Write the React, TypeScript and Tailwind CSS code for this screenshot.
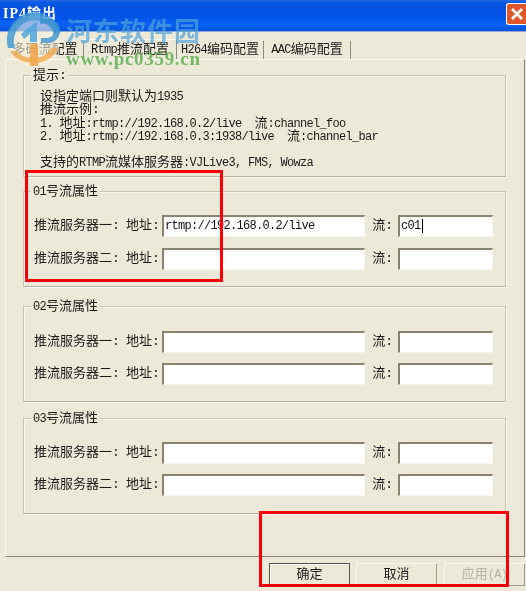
const cjk = "font-['Liberation_Mono','Noto_Sans_CJK_SC',monospace]";

function A({ children }: { children: React.ReactNode }) {
  return <span className="text-[12px] tracking-[-0.7px]">{children}</span>;
}

function Field({ children, className = "" }: { children?: React.ReactNode; className?: string }) {
  return (
    <div className={`h-[22px] bg-white border-t-2 border-l-2 border-b border-r border-t-[#87836f] border-l-[#87836f] border-b-[#f6f5ee] border-r-[#f6f5ee] pl-[1px] text-[12px] tracking-[-0.7px] leading-[18px] text-[#111] ${className}`}>
      {children}
    </div>
  );
}

function Row({ label, url, stream }: { label: string; url?: string; stream?: React.ReactNode }) {
  return (
    <div className="flex items-center h-[22px]">
      <span className="w-[92px] shrink-0 text-[13px] whitespace-nowrap">{label}</span>
      <span className="w-[36px] shrink-0 text-[13px] whitespace-nowrap">地址:</span>
      <Field className="w-[203px] shrink-0">{url}</Field>
      <span className="w-[33px] shrink-0 pr-[5px] text-[13px] text-right whitespace-nowrap">流:</span>
      <Field className="w-[95px] shrink-0">{stream}</Field>
    </div>
  );
}

function Group({ title, children, className = "" }: { title: React.ReactNode; children: React.ReactNode; className?: string }) {
  return (
    <div className={`relative w-[483px] border border-t-[#c5c2b0] border-l-[#c5c2b0] border-b-[#b5b2a0] border-r-[#c5c2b0] shadow-[inset_1px_1px_0_#f8f7f0,1px_1px_0_#f8f7f0] ${className}`}>
      <span className="absolute left-[7px] top-[-8px] bg-[#ece9d8] px-[2px] text-[13px] leading-[15px] whitespace-nowrap">{title}</span>
      {children}
    </div>
  );
}

function StreamGroup({ no, url, stream, className = "", rows }: { no: string; url?: string; stream?: React.ReactNode; className?: string; rows: string }) {
  return (
    <Group title={<><A>{no}</A>号流属性</>} className={`h-[96px] pl-[10px] ${className}`}>
      <div className={`flex flex-col ${rows}`}>
        <Row label="推流服务器一:" url={url} stream={stream} />
        <Row label="推流服务器二:" />
      </div>
    </Group>
  );
}

function Btn({ children, primary, disabled, className = "" }: { children: React.ReactNode; primary?: boolean; disabled?: boolean; className?: string }) {
  return (
    <div className={`w-[81px] h-[23px] flex items-center justify-center text-[13px] bg-[#ece9d8] border ${primary ? "border-[#55544a] shadow-[inset_1px_1px_0_#fff]" : "border-t-[#f8f7f0] border-l-[#f8f7f0] border-r-[#9d9a88] border-b-[#9d9a88]"} ${disabled ? "text-[#b5b2a0]" : ""} ${className}`}>
      {children}
    </div>
  );
}

function Tab({ children, active, className = "" }: { children: React.ReactNode; active?: boolean; className?: string }) {
  return (
    <div className={`flex items-center justify-center whitespace-nowrap text-[13px] border-r border-r-[#8f8c7b] ${active ? "h-[20px]" : "h-[18px]"} ${className}`}>
      {children}
    </div>
  );
}

function Line({ children }: { children?: React.ReactNode }) {
  return <div className="h-[13.3px] leading-[13.3px]">{children}</div>;
}

export default function App() {
  return (
    <div className={`relative w-[526px] h-[591px] overflow-hidden bg-[#ece9d8] text-[#1a1a1a] blur-[0.3px] ${cjk}`}>
      <div className="h-[32px] flex items-center justify-between border-b border-b-[#8fa6d8] bg-[linear-gradient(180deg,#2a6ae0_0%,#0a5ae6_8%,#0350e0_25%,#0054e8_55%,#0a62f5_80%,#0252d8_100%)]">
        <span className="ml-[3px] mt-[-4px] text-white font-bold text-[14px] tracking-[1px] whitespace-nowrap font-['Liberation_Serif','Noto_Sans_CJK_SC',serif]">IP4输出</span>
        <div className="w-[20px] h-[22px] mt-[-4px] flex items-center justify-center rounded-l-[3px] border border-white bg-[#e0572c] border-r-0">
          <svg width="14" height="14" viewBox="0 0 14 14"><path d="M2 2L12 12M12 2L2 12" stroke="#fff" strokeWidth="2.6" /></svg>
        </div>
      </div>

      <div className="h-[27px] flex items-end pl-[7px]">
        <Tab className="w-[77px]">多码流配置</Tab>
        <Tab active className="w-[93px] border-t border-t-[#f8f7f0]"><A>Rtmp</A>推流配置</Tab>
        <Tab className="w-[87px]"><A>H264</A>编码配置</Tab>
        <Tab className="w-[87px]"><A>AAC</A>编码配置</Tab>
      </div>

      <div className="ml-[5px] w-[520px] h-[498px] pl-[17px] pt-[15px] flex flex-col border border-t-[#f8f7f0] border-l-[#f8f7f0] border-r-[#87836f] border-b-[#87836f]">
        <Group title="提示:" className="h-[102px] mb-[14px]">
          <div className="pl-[16px] pt-[14px] text-[13px] whitespace-pre">
            <Line>设指定端口则默认为<A>1935</A></Line>
            <Line>推流示例:</Line>
            <Line><A>1. </A>地址<A>:rtmp://192.168.0.2/live  </A>流<A>:channel_foo</A></Line>
            <Line><A>2. </A>地址<A>:rtmp://192.168.0.3:1938/live  </A>流<A>:channel_bar</A></Line>
            <Line />
            <Line>支持的<A>RTMP</A>流媒体服务器<A>:VJLive3, FMS, Wowza</A></Line>
          </div>
        </Group>
        <StreamGroup
          no="01"
          url="rtmp://192.168.0.2/live"
          stream={<span className="border-r border-r-black pr-[1px]">c01</span>}
          rows="pt-[23px] gap-[11px]"
          className="mb-[19px]"
        />
        <StreamGroup no="02" rows="pt-[24px] gap-[10px]" className="mb-[16px]" />
        <StreamGroup no="03" rows="pt-[23px] gap-[10px]" />
      </div>

      <div className="flex justify-end gap-[6px] pr-[1px] pt-[6px]">
        <Btn primary>确定</Btn>
        <Btn>取消</Btn>
        <Btn disabled className="ml-[1px]">应用 <A>(A)</A></Btn>
      </div>

      {/* watermark */}
      <div className="absolute left-[6px] top-[10px] w-[58px] h-[58px] pointer-events-none">
        <svg width="58" height="58" viewBox="0 0 58 58">
          <circle cx="28" cy="31" r="26" fill="#f8f0dc" opacity="0.6" />
          <path d="M2 38A27 27 0 0 1 55 22L48 24A20 20 0 0 0 9 38Z" fill="#3b93cf" opacity="0.8" />
          <path d="M15 24L31 11V32H24V24L18 29Z" fill="#4fa6dc" opacity="0.85" />
          <path d="M34 9H42A12 12 0 0 1 42 33H35V28H41A7 7 0 0 0 41 14H34Z" fill="#3b93cf" opacity="0.8" />
          <path d="M24 34H32V56H24Z" fill="#f0a040" opacity="0.8" />
          <path d="M4 41A26 22 0 0 0 52 38L45 38A19 15 0 0 1 11 41Z" fill="#f0a848" opacity="0.8" />
        </svg>
      </div>
      <div className="absolute left-[66px] top-[11px] text-[26px] leading-[38px] font-bold tracking-[1px] text-[#4fa3d8]/70 whitespace-nowrap font-['Noto_Sans_CJK_SC',sans-serif]">河东软件园</div>
      <div className="absolute left-[66px] top-[48px] text-[19px] leading-[22px] tracking-[0.7px] font-bold text-[#5aab4a]/80 whitespace-nowrap font-['Liberation_Serif',serif]">www.pc0359.cn</div>

      {/* annotation boxes */}
      <div className="absolute left-[25px] top-[170px] w-[198px] h-[112px] border-[3px] border-[#fb0007]" />
      <div className="absolute left-[259px] top-[511px] w-[250px] h-[76px] border-[3px] border-[#fb0007]" />
    </div>
  );
}
